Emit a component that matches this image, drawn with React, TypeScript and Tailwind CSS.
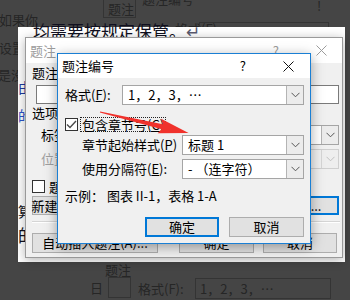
import React from 'react'

const Chevron = ({ dim = false }: { dim?: boolean }) => (
  <svg width="9" height="6" viewBox="0 0 9 6" fill="none">
    <path d="M0.5 0.8 L4.5 4.8 L8.5 0.8" stroke={dim ? '#c0c0c0' : '#555555'} strokeWidth="1" />
  </svg>
)

const Combo = ({ text, className = '', disabled = false }: { text: string; className?: string; disabled?: boolean }) => (
  <div
    className={`flex h-[20px] border ${
      disabled ? 'border-[#cfcfcf] bg-[#f0f0f0] text-[#a0a0a0]' : 'border-[#a5a5a5] bg-white'
    } ${className}`}
  >
    <div className="flex-1 overflow-hidden whitespace-nowrap px-[5px] leading-[18px]">{text}</div>
    <div
      className={`flex w-[17px] items-center justify-center border-l ${
        disabled ? 'border-[#d6d6d6] bg-[#eeeeee]' : 'border-[#b4b4b4] bg-[#ececec]'
      }`}
    >
      <Chevron dim={disabled} />
    </div>
  </div>
)

const CloseX = ({ color }: { color: string }) => (
  <svg width="11" height="11" viewBox="0 0 11 11">
    <path d="M0.5 0.5 L10.5 10.5 M10.5 0.5 L0.5 10.5" stroke={color} strokeWidth="1" />
  </svg>
)

const Checkbox = ({ checked = false }: { checked?: boolean }) => (
  <div className="flex h-[13px] w-[13px] shrink-0 items-center justify-center border border-[#333333] bg-white">
    {checked && (
      <svg width="11" height="9" viewBox="0 0 11 9" fill="none">
        <path d="M1 4.5 L4 7.5 L10 1" stroke="#4a4a4a" strokeWidth="1.4" />
      </svg>
    )}
  </div>
)

const Btn = ({ children, className = '', focus = false }: { children: React.ReactNode; className?: string; focus?: boolean }) => (
  <div
    className={`flex items-center justify-center whitespace-nowrap bg-[#e1e1e1] ${
      focus ? 'border-2 border-[#0078d7]' : 'border border-[#adadad]'
    } ${className}`}
  >
    {children}
  </div>
)

export default function App() {
  return (
    <div className="relative h-[300px] w-[350px] overflow-hidden bg-[#454545] font-['Noto_Sans_CJK_SC',sans-serif] text-[13px] text-black">
      {/* dimmed screen around the capture */}
      <div className="absolute inset-0 text-[#262626]">
        <span className="absolute left-[-1px] top-[12px] leading-[16px]">如果你</span>
        <span className="absolute left-[-1px] top-[40px] leading-[16px]">设置</span>
        <span className="absolute left-[-2px] top-[67px] leading-[16px]">是没</span>
        <div className="absolute left-[103px] top-[-4px] h-[22px] w-[33px] border border-[#343434]" />
        <span className="absolute left-[108px] top-[1px] leading-[16px]">题注</span>
        <span className="absolute left-[142px] top-[-9px] leading-[16px]">题注编号</span>
        <span className="absolute left-[317px] top-[-2px] leading-[16px]">!</span>
        <span className="absolute left-[175px] top-[21px] leading-[16px]">格式(F):</span>
        <div className="absolute left-[199px] top-[22px] h-[20px] w-[130px] border border-[#343434]" />
        <span className="absolute left-[105px] top-[262px] leading-[16px]">题注</span>
        <span className="absolute left-[90px] top-[280px] leading-[16px]">日</span>
        <div className="absolute left-[108px] top-[277px] h-[21px] w-[23px] border border-[#343434]" />
        <span className="absolute left-[138px] top-[281px] leading-[16px]">格式(F):</span>
        <div className="absolute left-[195px] top-[278px] h-[21px] w-[136px] border border-[#343434] pl-[4px] leading-[19px]">
          1，2，3，…
        </div>
      </div>

      {/* document page */}
      <div className="absolute left-[18px] top-[27px] h-[235px] w-[327px] bg-white">
        <div className="ml-[15px] mt-[-6px] whitespace-nowrap text-[17px] leading-[20px] text-[#101020]">
          均需要按规定保管。<span className="text-[#5a5a70]">↵</span>
        </div>
        <div className="mt-[38px] text-[14px] leading-[16px] text-[#1c3aa0]">由</div>
        <div className="mt-[12px] text-[14px] leading-[16px] text-[#2c52c8]">的</div>
        <div className="mt-[80px] text-[14px] leading-[16px] text-[#101020]">算</div>
        <div className="mt-[6px] whitespace-nowrap text-[17px] leading-[20px] text-[#101020]">的依据，对确定的事项和结果</div>
      </div>

      {/* 题注 dialog (inactive) */}
      <div className="absolute left-[25px] top-[37px] flex h-[221px] w-[318px] flex-col border border-[#9a9a9a] bg-white shadow-[0_2px_10px_rgba(0,0,0,0.3)]">
        <div className="flex h-[25px] items-center pl-[4px] pr-[15px] text-[#9c9c9c]">
          <span className="leading-[16px]">题注</span>
          <span className="ml-auto leading-[16px]">?</span>
          <div className="ml-[37px]">
            <CloseX color="#9c9c9c" />
          </div>
        </div>
        <div className="flex flex-1 flex-col bg-[#f0f0f0] pl-[6px] pr-[3px]">
          <div className="mt-[2px] leading-[16px]">
            题注(<u>C</u>):
          </div>
          <div className="ml-[4px] mt-[4px] h-[19px] border border-[#7a7a7a] bg-white" />
          <div className="mt-[1px] leading-[16px]">选项</div>
          <div className="mt-[4px] flex items-center">
            <span className="ml-[9px] w-[62px] leading-[16px]">
              标签(<u>L</u>):
            </span>
            <Combo text="图表" className="flex-1" />
          </div>
          <div className="mt-[4px] flex items-center">
            <span className="ml-[9px] w-[62px] leading-[16px] text-[#a0a0a0]">
              位置(<u>P</u>):
            </span>
            <Combo text="所选项目下方" disabled className="flex-1" />
          </div>
          <div className="mt-[11px] flex h-[13px] items-center gap-[4px]">
            <Checkbox />
            <span className="leading-[16px]">题注中不包含标签(E)</span>
          </div>
          <div className="mt-[3px] flex h-[19px] gap-[8px]">
            <Btn className="w-[80px]">新建标签(N)...</Btn>
            <Btn className="w-[80px]">删除标签(D)</Btn>
            <Btn focus className="ml-auto w-[90px]">编号(U)...</Btn>
          </div>
          <div className="mr-[-1px] mt-[6px] h-[2px] border-b border-t border-b-white border-t-[#d5d5d5]" />
          <div className="mt-[10px] flex h-[20px] pr-[2px]">
            <Btn className="w-[126px]">自动插入题注(A)...</Btn>
            <Btn className="ml-auto w-[75px]">确定</Btn>
            <Btn className="ml-[9px] w-[74px]">取消</Btn>
          </div>
        </div>
      </div>

      {/* 题注编号 dialog (active) */}
      <div className="absolute left-[57px] top-[53px] flex h-[191px] w-[254px] flex-col border border-[#1a7fd4] bg-white shadow-[0_3px_12px_rgba(0,0,0,0.35)]">
        <div className="flex h-[24px] items-center pl-[4px] pr-[16px]">
          <span className="leading-[16px]">题注编号</span>
          <span className="ml-auto leading-[16px]">?</span>
          <div className="ml-[37px]">
            <CloseX color="#111111" />
          </div>
        </div>
        <div className="flex flex-1 flex-col bg-[#f0f0f0] pl-[7px] pr-[6px]">
          <div className="mt-[7px] flex items-center">
            <span className="w-[57px] leading-[16px]">
              格式(<u>F</u>):
            </span>
            <Combo text="1，2，3，…" className="flex-1" />
          </div>
          <div className="mt-[12px] flex h-[15px] items-center gap-[2px]">
            <Checkbox checked />
            <span className="border border-dotted border-[#222222] px-[1px] leading-[13px]">
              包含章节号(<u>C</u>)
            </span>
          </div>
          <div className="mt-[3px] flex items-center">
            <span className="ml-[17px] w-[100px] leading-[16px]">
              章节起始样式(<u>P</u>)
            </span>
            <Combo text="标题 1" className="flex-1" />
          </div>
          <div className="mt-[4px] flex items-center">
            <span className="ml-[17px] w-[100px] leading-[16px]">
              使用分隔符(<u>E</u>):
            </span>
            <Combo text="-  （连字符）" className="flex-1" />
          </div>
          <div className="mt-[9px] whitespace-nowrap leading-[16px]">示例：&nbsp;图表 II-1，表格 1-A</div>
          <div className="mt-[13px] flex h-[20px] justify-end gap-[10px]">
            <Btn focus className="w-[74px]">
              确定
            </Btn>
            <Btn className="w-[75px]">取消</Btn>
          </div>
        </div>
      </div>

      {/* red annotation arrow */}
      <svg className="pointer-events-none absolute left-0 top-0" width="350" height="300" viewBox="0 0 350 300">
        <g transform="translate(100 112) rotate(13.3)">
          <polygon points="0,-0.6 64,-2.6 61,-7.5 91,0 61,7.5 64,2.6 0,0.6" fill="#f0322c" />
        </g>
      </svg>
    </div>
  )
}
